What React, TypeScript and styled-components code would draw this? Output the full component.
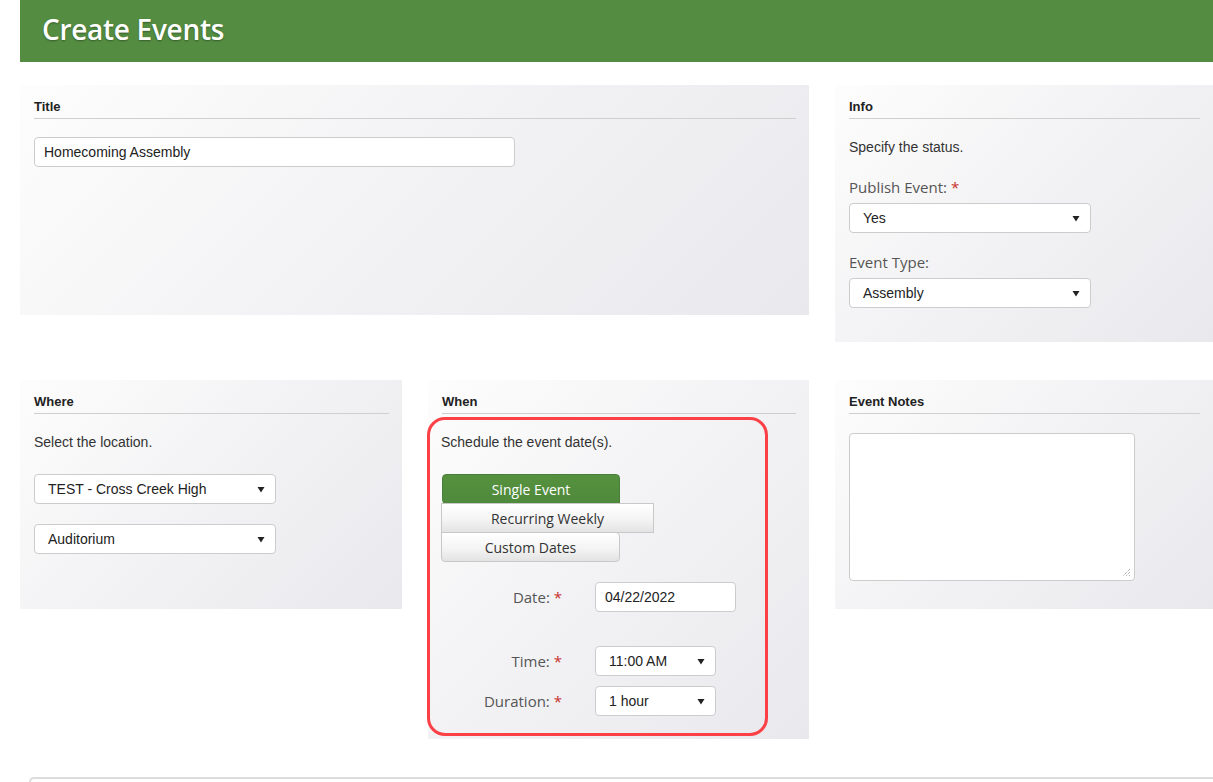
import React, { FC, ReactNode } from 'react';
import styled, { createGlobalStyle } from 'styled-components';

const GlobalStyle = createGlobalStyle`
  html, body {
    margin: 0;
    padding: 0;
    overflow: hidden;
    background: #fff;
    font-family: 'Liberation Sans', Arial, sans-serif;
    color: #333;
  }
`;

const Page = styled.div`
  padding-left: 20px;
`;

const Banner = styled.header`
  background: #548d41;
  height: 62px;
  box-sizing: border-box;
  display: flex;
  align-items: center;
  padding: 0 0 5px 22px;
  h1 {
    margin: 0;
    font-family: 'Open Sans', sans-serif;
    font-weight: 600;
    font-size: 28px;
    letter-spacing: -0.3px;
    color: #fff;
    text-shadow: 0 1px 2px rgba(0, 0, 0, 0.35);
  }
`;

const PanelRow = styled.div<{ $top: number }>`
  display: grid;
  grid-template-columns: 382px 381px 378px;
  column-gap: 26px;
  align-items: start;
  margin-top: ${({ $top }) => $top}px;
`;

const Panel = styled.section<{ $span?: number; $minHeight?: number }>`
  grid-column: span ${({ $span }) => $span || 1};
  min-height: ${({ $minHeight }) => $minHeight || 0}px;
  box-sizing: border-box;
  padding: 13px 13px 0 14px;
  background: linear-gradient(135deg, #fdfdfd 0%, #f3f3f5 45%, #e9e9ed 100%);
`;

const PanelTitle = styled.h3`
  margin: 0;
  font-size: 13px;
  font-weight: 700;
  line-height: 18px;
  color: #222;
  padding-bottom: 2px;
  border-bottom: 1px solid #cfcfcf;
`;

const Note = styled.p<{ $top: number }>`
  margin: ${({ $top }) => $top}px 0 0;
  font-size: 14px;
  line-height: 20px;
  color: #333;
`;

const FieldLabel = styled.label<{ $top: number }>`
  display: block;
  margin-top: ${({ $top }) => $top}px;
  font-family: 'Open Sans', sans-serif;
  font-size: 15px;
  line-height: 20px;
  color: #555;
`;

const Req = styled.span`
  color: #c9302c;
`;

const TextBox = styled.div<{ $width: number; $top?: number }>`
  box-sizing: border-box;
  width: ${({ $width }) => $width}px;
  height: 30px;
  margin-top: ${({ $top }) => $top || 0}px;
  padding: 0 9px;
  display: flex;
  align-items: center;
  background: #fff;
  border: 1px solid #ccc;
  border-radius: 4px;
  font-size: 14px;
  color: #222;
`;

const SelectBox = styled.div<{ $width: number; $top?: number }>`
  box-sizing: border-box;
  width: ${({ $width }) => $width}px;
  height: 30px;
  margin-top: ${({ $top }) => $top || 0}px;
  padding: 0 10px 0 13px;
  display: flex;
  align-items: center;
  justify-content: space-between;
  background: #fff;
  border: 1px solid #ccc;
  border-radius: 4px;
  font-size: 14px;
  color: #222;
  svg {
    flex: none;
  }
`;

const NotesArea = styled.div`
  box-sizing: border-box;
  width: 286px;
  height: 148px;
  margin-top: 19px;
  display: flex;
  align-items: flex-end;
  justify-content: flex-end;
  padding: 0 3px 3px 0;
  background: #fff;
  border: 1px solid #ccc;
  border-radius: 4px;
`;

// red outline that calls out the scheduling block
const Highlight = styled.div`
  box-sizing: border-box;
  width: 341px;
  margin: 3px 0 0 -15px;
  padding: 12px 11px 17px 11px;
  border: 3px solid #fb4146;
  border-radius: 18px;
`;

const ModeButtons = styled.div`
  display: flex;
  flex-direction: column;
  align-items: flex-start;
  margin-top: 22px;
`;

const ModeButton = styled.button<{ $active?: boolean; $width: number; $shift?: number; $radius: string }>`
  box-sizing: border-box;
  width: ${({ $width }) => $width}px;
  height: 30px;
  margin: 0 0 0 ${({ $shift }) => $shift || 0}px;
  padding: 0;
  font-family: 'Open Sans', sans-serif;
  font-size: 14px;
  border-radius: ${({ $radius }) => $radius};
  border: 1px solid ${({ $active }) => ($active ? '#4a7f39' : '#c8c8c8')};
  color: ${({ $active }) => ($active ? '#fff' : '#333')};
  background: ${({ $active }) =>
    $active
      ? 'linear-gradient(#56913f, #4f8a3c)'
      : 'linear-gradient(#ffffff 0%, #f4f4f4 55%, #e3e3e3 100%)'};
  & + & {
    margin-top: -1px;
  }
`;

const FormGrid = styled.div`
  display: grid;
  grid-template-columns: 121px auto;
  column-gap: 33px;
  align-items: center;
  justify-items: start;
  margin-top: 20px;
`;

const GridLabel = styled.span<{ $top?: number }>`
  justify-self: end;
  margin-top: ${({ $top }) => $top || 0}px;
  font-family: 'Open Sans', sans-serif;
  font-size: 15px;
  color: #555;
`;

const BottomCard = styled.div`
  margin: 38px 0 0 9px;
  height: 3px;
  border: 2px solid #dcdcdc;
  border-right: none;
  border-bottom: none;
  border-radius: 5px 0 0 0;
`;

const Caret: FC = () => (
  <svg width="8" height="7" viewBox="0 0 8 7">
    <path d="M0.5 1 L7.5 1 L4 6.5 Z" fill="#222" />
  </svg>
);

const Select: FC<{ width: number; top?: number; children: ReactNode }> = ({ width, top, children }) => (
  <SelectBox $width={width} $top={top}>
    <span>{children}</span>
    <Caret />
  </SelectBox>
);

const Required: FC<{ children: ReactNode }> = ({ children }) => (
  <>
    {children} <Req>*</Req>
  </>
);

const App: FC = () => (
  <Page>
    <GlobalStyle />
    <Banner>
      <h1>Create Events</h1>
    </Banner>

    <PanelRow $top={23}>
      <Panel $span={2} $minHeight={230}>
        <PanelTitle>Title</PanelTitle>
        <TextBox $width={481} $top={18}>Homecoming Assembly</TextBox>
      </Panel>
      <Panel $minHeight={257}>
        <PanelTitle>Info</PanelTitle>
        <Note $top={18}>Specify the status.</Note>
        <FieldLabel $top={20}>
          <Required>Publish Event:</Required>
        </FieldLabel>
        <Select width={242} top={6}>Yes</Select>
        <FieldLabel $top={19}>Event Type:</FieldLabel>
        <Select width={242} top={6}>Assembly</Select>
      </Panel>
    </PanelRow>

    <PanelRow $top={38}>
      <Panel $minHeight={229}>
        <PanelTitle>Where</PanelTitle>
        <Note $top={18}>Select the location.</Note>
        <Select width={242} top={22}>TEST - Cross Creek High</Select>
        <Select width={242} top={20}>Auditorium</Select>
      </Panel>
      <Panel $minHeight={359}>
        <PanelTitle>When</PanelTitle>
        <Highlight>
          <Note $top={0}>Schedule the event date(s).</Note>
          <ModeButtons>
            <ModeButton $active $width={178} $shift={1} $radius="4px 4px 0 4px">
              Single Event
            </ModeButton>
            <ModeButton $width={213} $radius="0 0 0 0">
              Recurring Weekly
            </ModeButton>
            <ModeButton $width={179} $radius="0 4px 4px 4px">
              Custom Dates
            </ModeButton>
          </ModeButtons>
          <FormGrid>
            <GridLabel>
              <Required>Date:</Required>
            </GridLabel>
            <TextBox $width={141}>04/22/2022</TextBox>
            <GridLabel $top={34}>
              <Required>Time:</Required>
            </GridLabel>
            <Select width={121} top={34}>11:00 AM</Select>
            <GridLabel $top={10}>
              <Required>Duration:</Required>
            </GridLabel>
            <Select width={121} top={10}>1 hour</Select>
          </FormGrid>
        </Highlight>
      </Panel>
      <Panel $minHeight={229}>
        <PanelTitle>Event Notes</PanelTitle>
        <NotesArea>
          <svg width="10" height="10" viewBox="0 0 10 10">
            <path d="M9 2 L2 9 M9 5 L5 9 M9 8 L8 9" stroke="#888" strokeWidth="1" strokeDasharray="1 1" />
          </svg>
        </NotesArea>
      </Panel>
    </PanelRow>

    <BottomCard />
  </Page>
);

export default App;
